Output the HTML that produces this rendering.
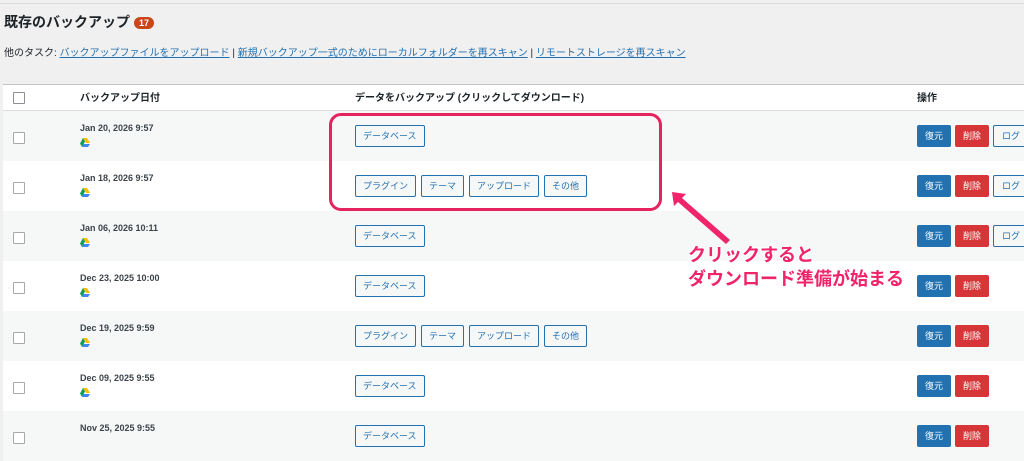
<!DOCTYPE html>
<html><head><meta charset="utf-8"><style>
body{margin:0;width:1024px;height:434px;overflow:hidden;background:#f0f0f1;font-family:"Liberation Sans","Noto Sans CJK JP",sans-serif;color:#1d2327;position:relative}
.top{position:absolute;left:0;top:0;width:1024px;height:3px;border-bottom:1px solid #dcdcde}
h2{position:absolute;left:4px;top:12px;margin:0;font-size:14px;font-weight:bold}
.badge{display:inline-block;background:#c9461a;color:#fff;border-radius:9px;font-size:9px;padding:1px 5px;margin-left:4px;vertical-align:1px}
.tasks{position:absolute;left:4px;top:44px;font-size:10px}
.tasks a{color:#2271b1;text-decoration:underline}
.tbl{position:absolute;left:3px;top:84px;width:1030px;background:#fff;border-top:1px solid #c3c4c7}
.row{position:relative;height:50px;line-height:1}
.row.g{background:#f6f7f7}
.head{height:25px;border-bottom:1px solid #dcdcde;font-size:10px;font-weight:bold}
.row>div{position:absolute;top:0}
.cb{position:absolute;left:10px;top:21px;width:10px;height:10px;border:1px solid #a7aaad;background:#fff;border-radius:1px}
.head .cb{top:7px;border-color:#8c8f94}
.c1{left:77px}.c2{left:352px}.c3{left:914px}
.head .c1,.head .c2,.head .c3{top:9px}
.d{top:13px!important;font-weight:bold;font-size:9px;color:#3c434a}
.drive{display:block;margin-top:5px}
.btns{top:14px!important;white-space:nowrap}
.b{display:inline-block;box-sizing:border-box;height:22px;line-height:20px;border:1px solid #2271b1;color:#2271b1;background:#f6f7f7;border-radius:2px;font-size:9px;padding:0 7px;margin-right:5px}
.a{display:inline-block;box-sizing:border-box;height:22px;line-height:22px;color:#fff;font-size:9px;padding:0 8px;border-radius:2px;margin-right:4px}
.r{background:#2271b1}.x{background:#d63638}
.l{display:inline-block;box-sizing:border-box;height:22px;line-height:20px;border:1px solid #2271b1;color:#2271b1;background:#f6f7f7;font-size:9px;padding:0 8px;border-radius:2px}
.box{position:absolute;left:329px;top:113px;width:327px;height:92px;border:3px solid #e5245f;border-radius:12px}
.note{position:absolute;left:688px;top:243px;color:#f0246a;font-size:18px;font-weight:bold;line-height:24px;text-shadow:1px 1px 0 #fff,-1px -1px 0 #fff,1px -1px 0 #fff,-1px 1px 0 #fff}
</style></head><body>
<div class="top"></div>
<h2>既存のバックアップ<span class="badge">17</span></h2>
<div class="tasks">他のタスク: <a>バックアップファイルをアップロード</a> | <a>新規バックアップ一式のためにローカルフォルダーを再スキャン</a> | <a>リモートストレージを再スキャン</a></div>
<div class="tbl">
<div class="row head"><span class="cb"></span><div class="c1">バックアップ日付</div><div class="c2">データをバックアップ (クリックしてダウンロード)</div><div class="c3">操作</div></div>
<div class="row g"><span class="cb"></span><div class="c1 d">Jan 20, 2026 9:57<svg class="drive" width="10" height="9" viewBox="0 0 10 9"><path d="M3 0h4l3 5H6z" fill="#fbbc04"/><path d="M3 0l2 3.5L2 9 0 5.5z" fill="#0f9d58"/><path d="M2 9l1.5-3H10L8 9z" fill="#4285f4"/></svg></div><div class="c2 btns"><span class="b">データベース</span></div><div class="c3 btns"><span class="a r">復元</span><span class="a x">削除</span><span class="l">ログ</span></div></div>
<div class="row"><span class="cb"></span><div class="c1 d">Jan 18, 2026 9:57<svg class="drive" width="10" height="9" viewBox="0 0 10 9"><path d="M3 0h4l3 5H6z" fill="#fbbc04"/><path d="M3 0l2 3.5L2 9 0 5.5z" fill="#0f9d58"/><path d="M2 9l1.5-3H10L8 9z" fill="#4285f4"/></svg></div><div class="c2 btns"><span class="b">プラグイン</span><span class="b">テーマ</span><span class="b">アップロード</span><span class="b">その他</span></div><div class="c3 btns"><span class="a r">復元</span><span class="a x">削除</span><span class="l">ログ</span></div></div>
<div class="row g"><span class="cb"></span><div class="c1 d">Jan 06, 2026 10:11<svg class="drive" width="10" height="9" viewBox="0 0 10 9"><path d="M3 0h4l3 5H6z" fill="#fbbc04"/><path d="M3 0l2 3.5L2 9 0 5.5z" fill="#0f9d58"/><path d="M2 9l1.5-3H10L8 9z" fill="#4285f4"/></svg></div><div class="c2 btns"><span class="b">データベース</span></div><div class="c3 btns"><span class="a r">復元</span><span class="a x">削除</span><span class="l">ログ</span></div></div>
<div class="row"><span class="cb"></span><div class="c1 d">Dec 23, 2025 10:00<svg class="drive" width="10" height="9" viewBox="0 0 10 9"><path d="M3 0h4l3 5H6z" fill="#fbbc04"/><path d="M3 0l2 3.5L2 9 0 5.5z" fill="#0f9d58"/><path d="M2 9l1.5-3H10L8 9z" fill="#4285f4"/></svg></div><div class="c2 btns"><span class="b">データベース</span></div><div class="c3 btns"><span class="a r">復元</span><span class="a x">削除</span></div></div>
<div class="row g"><span class="cb"></span><div class="c1 d">Dec 19, 2025 9:59<svg class="drive" width="10" height="9" viewBox="0 0 10 9"><path d="M3 0h4l3 5H6z" fill="#fbbc04"/><path d="M3 0l2 3.5L2 9 0 5.5z" fill="#0f9d58"/><path d="M2 9l1.5-3H10L8 9z" fill="#4285f4"/></svg></div><div class="c2 btns"><span class="b">プラグイン</span><span class="b">テーマ</span><span class="b">アップロード</span><span class="b">その他</span></div><div class="c3 btns"><span class="a r">復元</span><span class="a x">削除</span></div></div>
<div class="row"><span class="cb"></span><div class="c1 d">Dec 09, 2025 9:55<svg class="drive" width="10" height="9" viewBox="0 0 10 9"><path d="M3 0h4l3 5H6z" fill="#fbbc04"/><path d="M3 0l2 3.5L2 9 0 5.5z" fill="#0f9d58"/><path d="M2 9l1.5-3H10L8 9z" fill="#4285f4"/></svg></div><div class="c2 btns"><span class="b">データベース</span></div><div class="c3 btns"><span class="a r">復元</span><span class="a x">削除</span></div></div>
<div class="row g"><span class="cb"></span><div class="c1 d">Nov 25, 2025 9:55</div><div class="c2 btns"><span class="b">データベース</span></div><div class="c3 btns"><span class="a r">復元</span><span class="a x">削除</span></div></div>
</div>
<div class="box"></div>
<svg style="position:absolute;left:668px;top:188px" width="80" height="60" viewBox="0 0 80 60"><path d="M4 4 L18 6 L14 10 L62 52 L58 56 L10 14 L6 18 Z" fill="#f0246a"/></svg>
<div class="note">クリックすると<br>ダウンロード準備が始まる</div>
</body></html>
